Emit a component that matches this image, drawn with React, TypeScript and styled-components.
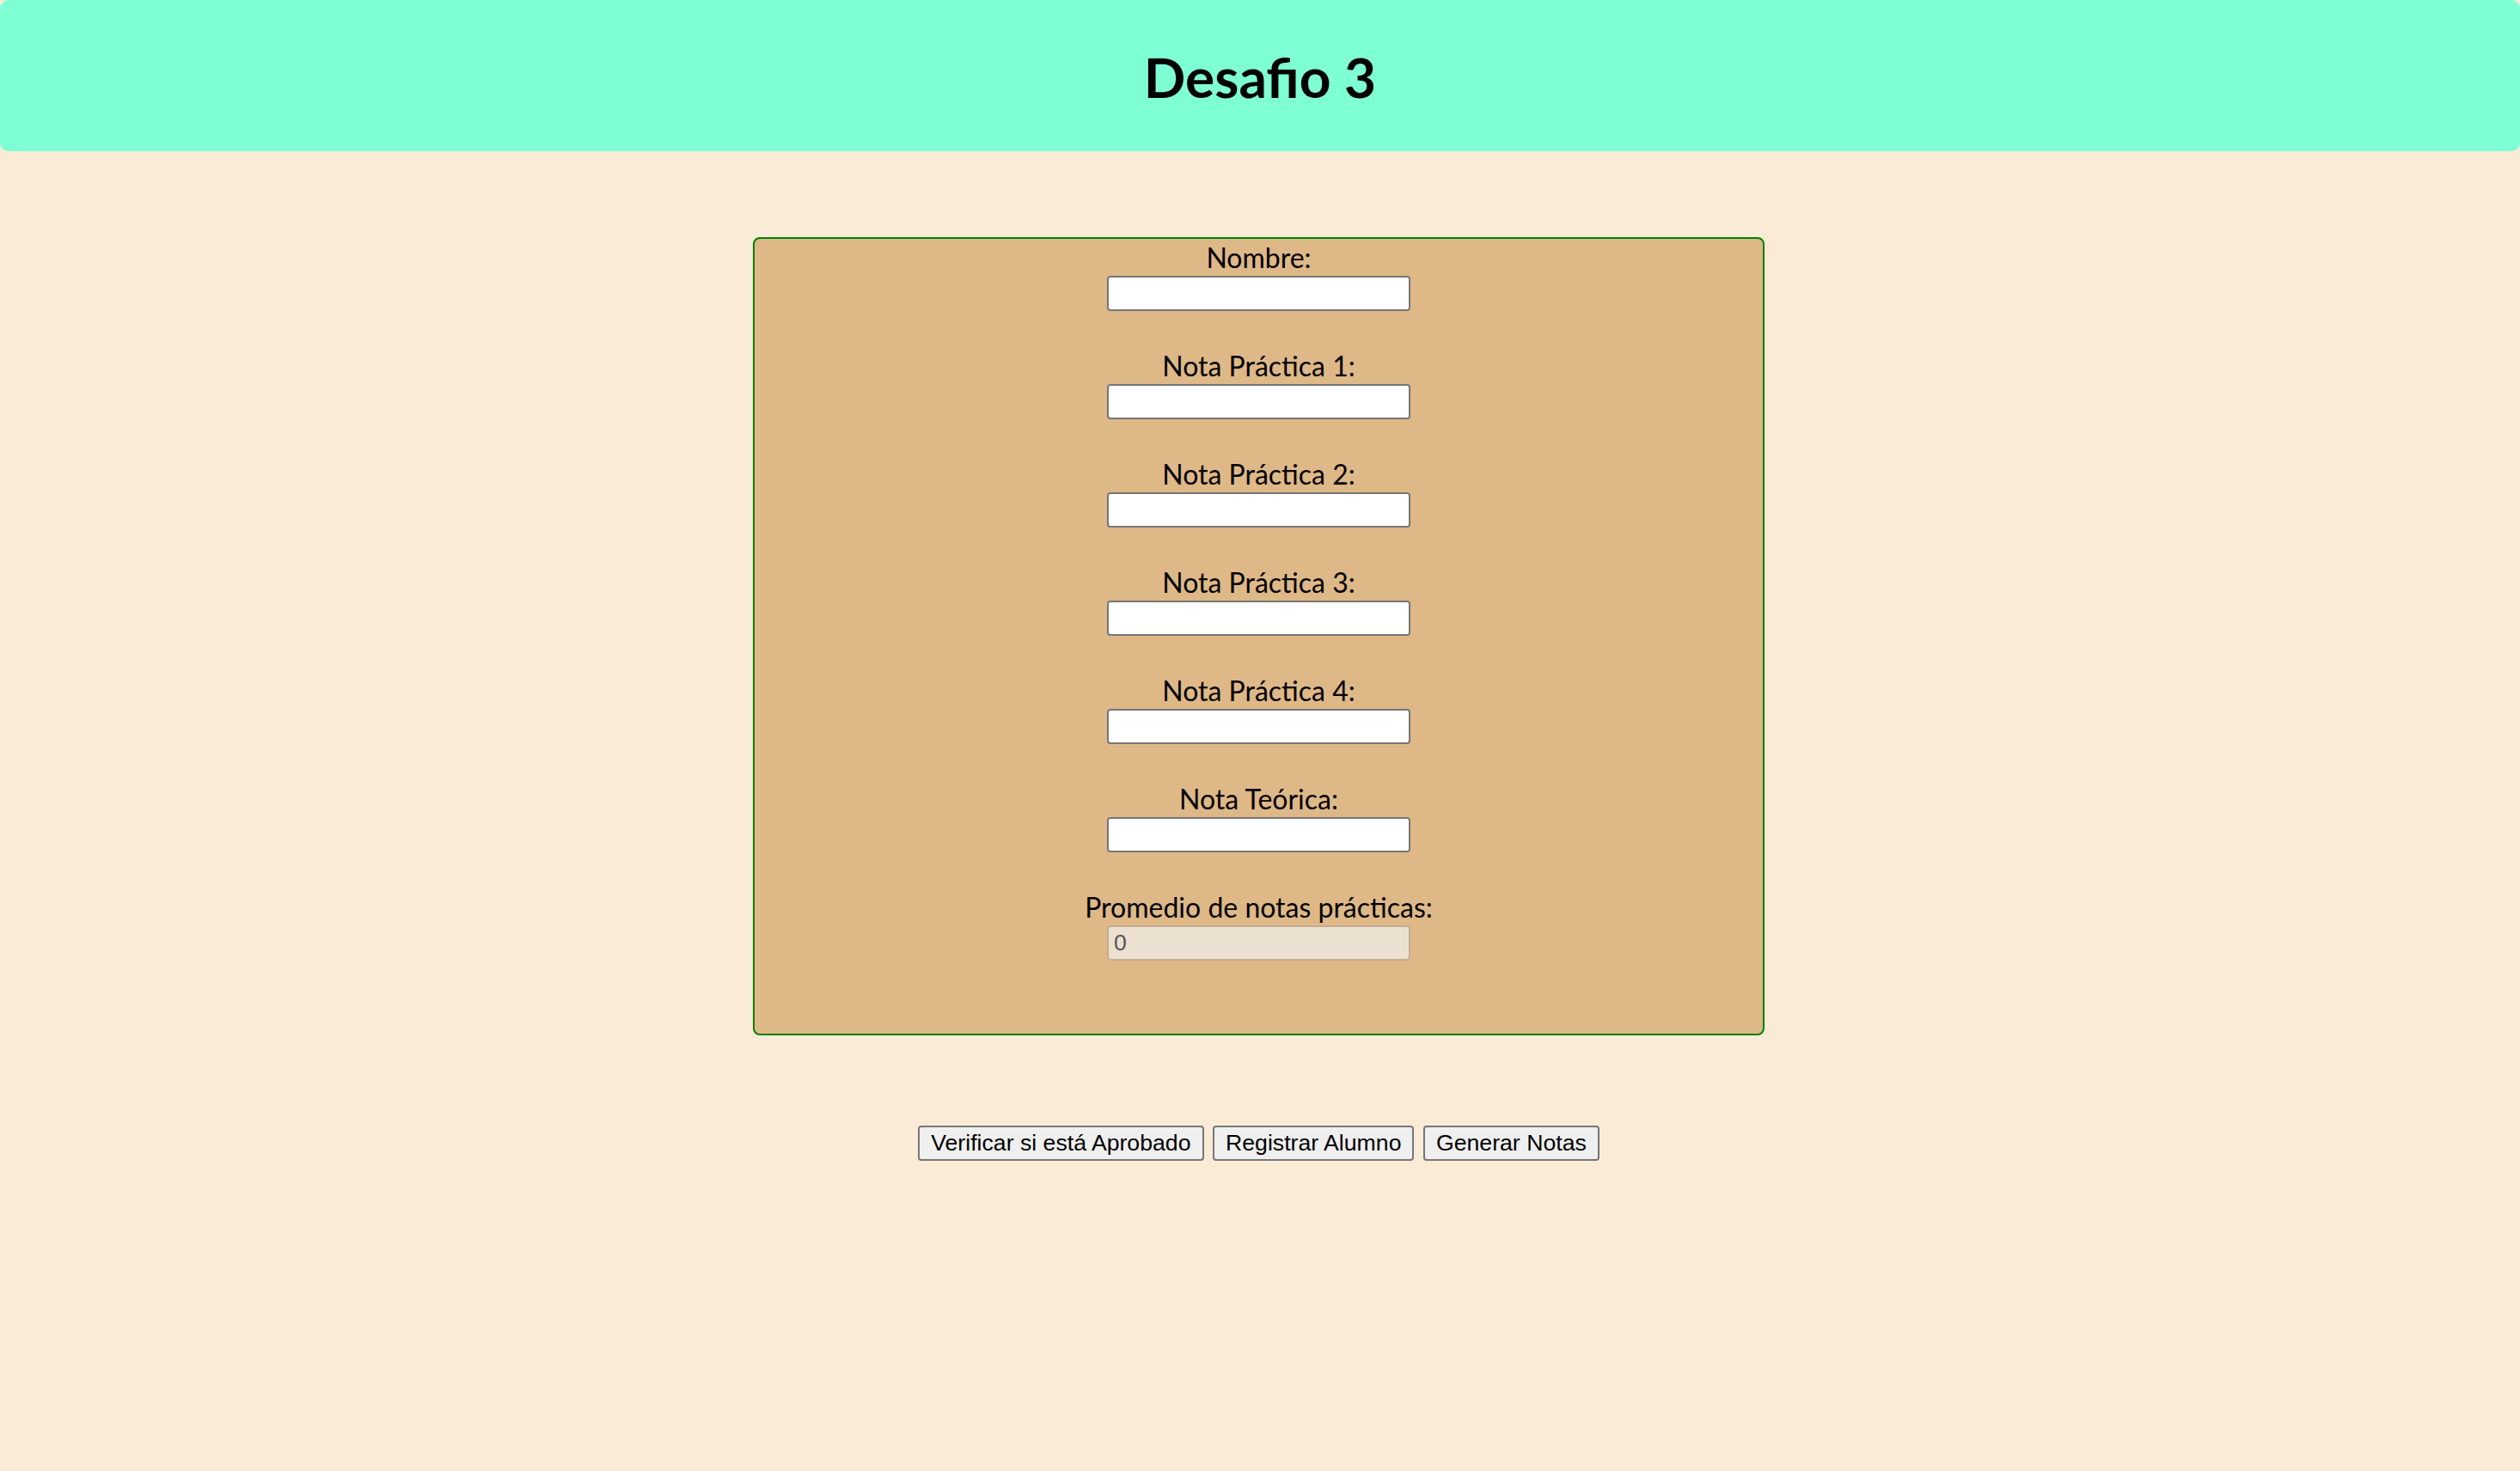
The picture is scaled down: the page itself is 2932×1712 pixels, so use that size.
import React from "react";
import styled, { createGlobalStyle } from "styled-components";

const GlobalStyle = createGlobalStyle`
  html, body {
    margin: 0;
    padding: 0;
    background: #faebd7;
  }
  body {
    font-family: Lato, "Open Sans", sans-serif;
    color: #000;
  }
`;

const Page = styled.div`
  min-height: 1712px;
  background: #faebd7;
  display: flex;
  flex-direction: column;
  align-items: center;
`;

const Header = styled.header`
  align-self: stretch;
  height: 176px;
  background: #7fffd4;
  border-radius: 10px;
  display: flex;
  align-items: center;
  justify-content: center;
`;

const Title = styled.h1`
  margin: 0;
  padding-top: 4px;
  font-family: Lato, "Open Sans", sans-serif;
  font-weight: 700;
  font-size: 64px;
  line-height: 1;
`;

const FormBox = styled.form`
  box-sizing: border-box;
  width: 1177px;
  margin-top: 100px;
  margin-right: 3px;
  background: #deb887;
  border: 2px solid #008000;
  border-radius: 8px;
  padding-bottom: 85px;
  display: flex;
  flex-direction: column;
  align-items: center;
  gap: 42.5px;
`;

const Field = styled.div`
  display: flex;
  flex-direction: column;
  align-items: center;
`;

const Label = styled.label`
  box-sizing: border-box;
  font-family: Lato, "Open Sans", sans-serif;
  font-size: 32px;
  line-height: 40.5px;
  padding-top: 2px;
  height: 42.5px;
  white-space: nowrap;
`;

const Input = styled.input<{ $readOnlyLook?: boolean }>`
  box-sizing: border-box;
  width: 353px;
  height: 41px;
  margin: 0;
  padding: 0 6px;
  border: 2px solid ${(p) => (p.$readOnlyLook ? "#c2ad92" : "#767676")};
  border-radius: 4px;
  background: ${(p) => (p.$readOnlyLook ? "#ece0d0" : "#ffffff")};
  color: ${(p) => (p.$readOnlyLook ? "#555555" : "#000")};
  font-family: "Liberation Sans", Arial, sans-serif;
  font-size: 26.67px;
  outline: none;
`;

const Actions = styled.div`
  margin-top: 105px;
  margin-right: 3px;
  display: flex;
  gap: 10.5px;
`;

const Button = styled.button`
  box-sizing: border-box;
  height: 41px;
  padding: 0 13px;
  background: #efefef;
  border: 2px solid #767676;
  border-radius: 4px;
  color: #000;
  font-family: "Liberation Sans", Arial, sans-serif;
  font-size: 26.67px;
  line-height: 1;
  cursor: pointer;
`;

const fields = [
  { id: "nombre", label: "Nombre:" },
  { id: "np1", label: "Nota Práctica 1:" },
  { id: "np2", label: "Nota Práctica 2:" },
  { id: "np3", label: "Nota Práctica 3:" },
  { id: "np4", label: "Nota Práctica 4:" },
  { id: "nt", label: "Nota Teórica:" },
];

export default function App() {
  return (
    <>
      <GlobalStyle />
      <Page>
        <Header>
          <Title>Desafio 3</Title>
        </Header>
        <FormBox onSubmit={(e) => e.preventDefault()}>
          {fields.map((f) => (
            <Field key={f.id}>
              <Label htmlFor={f.id}>{f.label}</Label>
              <Input id={f.id} type="text" />
            </Field>
          ))}
          <Field>
            <Label htmlFor="promedio">Promedio de notas prácticas:</Label>
            <Input id="promedio" type="text" value="0" readOnly $readOnlyLook />
          </Field>
        </FormBox>
        <Actions>
          <Button type="button">Verificar si está Aprobado</Button>
          <Button type="button">Registrar Alumno</Button>
          <Button type="button">Generar Notas</Button>
        </Actions>
      </Page>
    </>
  );
}
